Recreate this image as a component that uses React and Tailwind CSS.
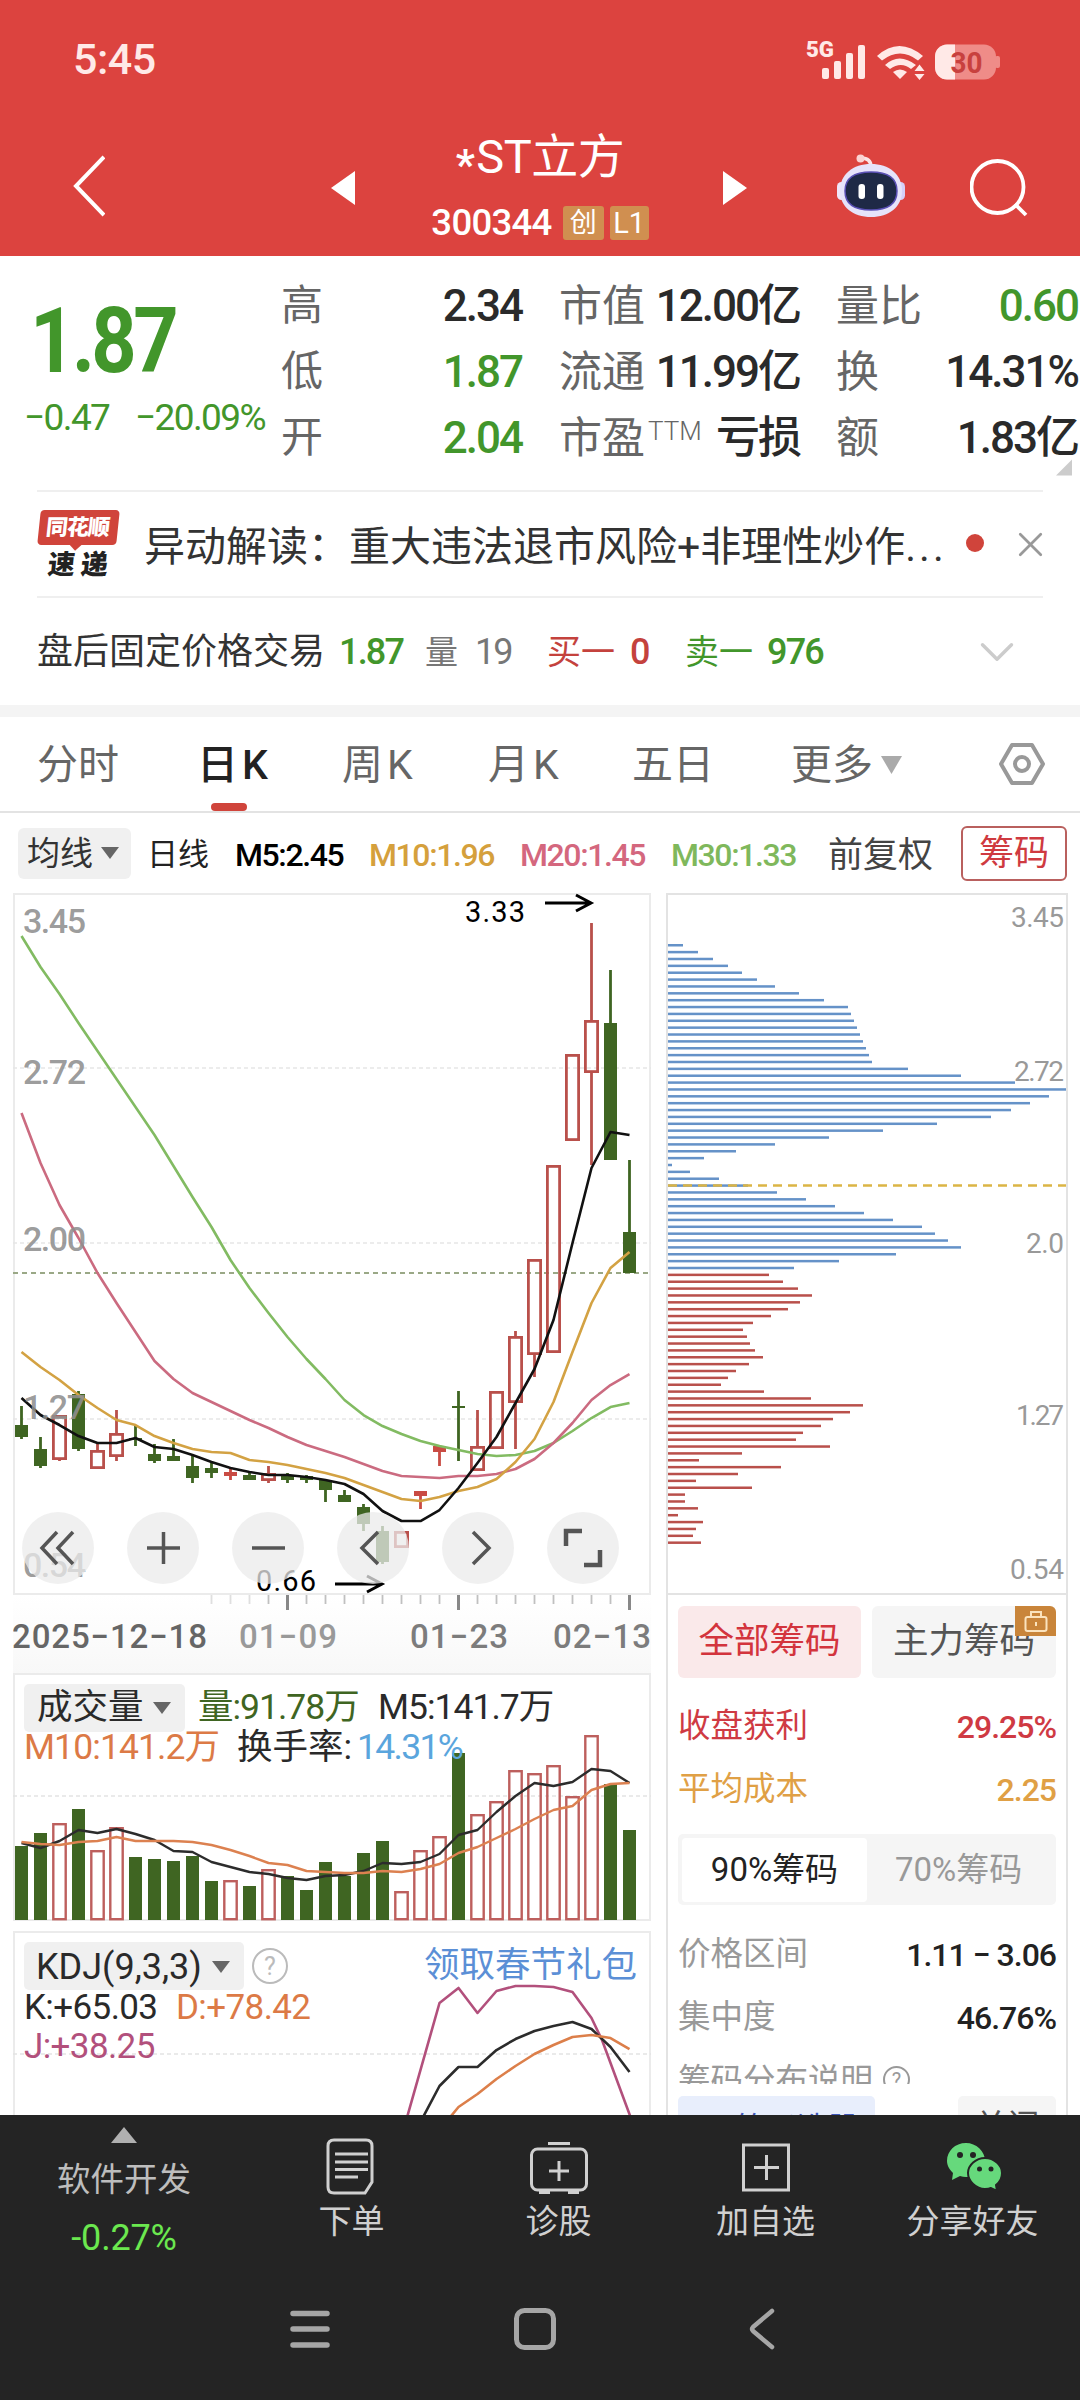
import { ChevronDown, X } from 'lucide-react'

const GREEN = '#3f6522'
const RED = '#b9504b'

// x of the i-th trading day in the left charts
const dayX = (i) => 21.5 + i * 19

const toPoints = (values, from = 0) => values.map((y, i) => `${dayX(i + from)},${y}`).join(' ')

// [direction, body top, body bottom, high, low]
const candles = [
  ['down', 1425, 1437, 1406, 1439],
  ['down', 1449, 1466, 1437, 1468],
  ['up', 1415, 1460, 1415, 1461],
  ['down', 1394, 1449, 1391, 1451],
  ['up', 1450, 1469, 1444, 1469],
  ['up', 1433, 1457, 1410, 1461],
  ['down', 1438, 1440, 1426, 1446],
  ['down', 1454, 1461, 1444, 1463],
  ['down', 1456, 1461, 1439, 1461],
  ['down', 1466, 1478, 1456, 1483],
  ['down', 1468, 1473, 1463, 1478],
  ['solid', 1472, 1476, 1468, 1480],
  ['down', 1475, 1480, 1473, 1480],
  ['up', 1473, 1481, 1466, 1483],
  ['down', 1475, 1480, 1473, 1483],
  ['down', 1476, 1480, 1475, 1483],
  ['down', 1480, 1490, 1479, 1502],
  ['down', 1495, 1502, 1490, 1502],
  ['down', 1507, 1524, 1504, 1531],
  ['down', 1531, 1562, 1526, 1564],
  ['up', 1531, 1548, 1531, 1548],
  ['solid', 1491, 1496, 1491, 1509],
  ['solid', 1446, 1452, 1446, 1466],
  ['down', 1406, 1408, 1391, 1461],
  ['up', 1446, 1471, 1410, 1471],
  ['up', 1391, 1449, 1391, 1449],
  ['up', 1336, 1403, 1331, 1449],
  ['up', 1259, 1355, 1259, 1377],
  ['up', 1165, 1353, 1165, 1353],
  ['up', 1054, 1141, 1054, 1141],
  ['up', 1020, 1073, 923, 1165],
  ['down', 1023, 1160, 970, 1160],
  ['down', 1232, 1273, 1160, 1273],
]

const ma30 = [936, 967, 994, 1023, 1051, 1079, 1107, 1135, 1166, 1197, 1227, 1260, 1288, 1313, 1337, 1359, 1379, 1400, 1415, 1426, 1434, 1441, 1446, 1450, 1454, 1456, 1455, 1451, 1443, 1431, 1418, 1407, 1403]
const ma20 = [1113, 1163, 1205, 1238, 1273, 1303, 1332, 1361, 1379, 1393, 1402, 1411, 1420, 1428, 1437, 1445, 1451, 1457, 1464, 1471, 1476, 1477, 1478, 1476, 1476, 1474, 1469, 1459, 1443, 1423, 1400, 1385, 1374]
const ma10 = [1352, 1367, 1380, 1395, 1408, 1420, 1425, 1436, 1443, 1449, 1452, 1453, 1460, 1462, 1465, 1469, 1473, 1478, 1485, 1492, 1499, 1501, 1497, 1491, 1487, 1479, 1462, 1439, 1402, 1352, 1303, 1268, 1252]
const ma5 = [1398, 1415, 1425, 1436, 1443, 1443, 1438, 1447, 1449, 1455, 1462, 1468, 1472, 1475, 1475, 1477, 1480, 1484, 1494, 1511, 1521, 1521, 1510, 1488, 1463, 1437, 1403, 1369, 1320, 1243, 1168, 1132, 1135]

const volumes = [1846, 1833, 1823, 1809, 1850, 1827, 1857, 1859, 1861, 1856, 1881, 1880, 1886, 1869, 1876, 1890, 1862, 1876, 1853, 1841, 1891, 1850, 1836, 1753, 1814, 1801, 1770, 1773, 1765, 1796, 1735, 1784, 1830]
const vol5 = [1843, 1848, 1841, 1830, 1833, 1829, 1834, 1840, 1851, 1852, 1862, 1867, 1872, 1874, 1878, 1880, 1876, 1875, 1871, 1863, 1864, 1862, 1854, 1835, 1830, 1812, 1796, 1783, 1786, 1782, 1769, 1771, 1783]
const vol10 = [1842, 1844, 1845, 1842, 1841, 1837, 1841, 1841, 1841, 1842, 1845, 1850, 1856, 1863, 1865, 1871, 1872, 1873, 1873, 1871, 1872, 1869, 1864, 1853, 1847, 1838, 1829, 1819, 1810, 1806, 1790, 1784, 1783]

// chip distribution, top price first; the last 40 rows are in profit
const chips = [
  15, 30, 45, 60, 74, 89, 107, 131, 156, 180, 183, 186, 189, 192, 195, 198, 201, 204, 240, 293, 347, 400, 381, 362, 343, 323,
  269, 215, 161, 107, 68, 36, 4, 22, 51, 80, 109, 138, 167, 196, 225, 254, 267, 280, 293, 228, 171, 126,
  101, 115, 130, 144, 132, 120, 103, 85, 75, 79, 82, 87, 95, 81, 68, 60, 53, 96, 143, 195, 182, 165, 153, 135, 128, 162, 74, 31,
  113, 70, 28, 84, 17, 17, 30, 10, 35, 28, 25, 33,
]

const stats = [
  ['高', '2.34', 'text-[#2a2a2a]', '市值', '12.00亿', '量比', '0.60', 'text-[#42962b]'],
  ['低', '1.87', 'text-[#42962b]', '流通', '11.99亿', '换', '14.31%', 'text-[#2a2a2a]'],
  ['开', '2.04', 'text-[#42962b]', '市盈', '亏损', '额', '1.83亿', 'text-[#2a2a2a]'],
]

function Caret({ className }) {
  return (
    <svg viewBox="0 0 18 12" preserveAspectRatio="none" className={className} fill="currentColor">
      <path d="M0 0h18L9 12z" />
    </svg>
  )
}

function StatusBar() {
  return (
    <div className="flex h-[118px] items-center justify-between pl-[73px] pr-[78px] text-[#ffe9e7]">
      <span className="text-[43px] font-medium tracking-[-0.5px]">5:45</span>
      <svg viewBox="804 34 198 44" className="h-[44px] w-[198px]" fill="currentColor">
        <text x="806" y="53.5" fontSize="22" fontWeight="900" textLength="28" lengthAdjust="spacingAndGlyphs">5G</text>
        <rect x="822" y="65" width="7" height="11" rx="2" />
        <rect x="834" y="58" width="7" height="18" rx="2" />
        <rect x="846" y="50" width="7" height="26" rx="2" />
        <rect x="858" y="42" width="7" height="34" rx="2" />
        <path d="M877 53q22-20 46 0l-5 4.500q-18-14-36 0z" />
        <path d="M885 62q14-13 31 0l-5 4q-10-8-21 0z" />
        <path d="M893 69q7-5 14 0l-7 7z" />
        <path d="M914.500 68l5-6.500 5 6.500zM914.500 71l5 6 5-6z" />
        <rect x="935" y="41.500" width="61" height="35" rx="12" fill="#ef8c88" />
        <path d="M947 41.500h8v35h-8a12 12 0 0 1-12-12v-11a12 12 0 0 1 12-12z" />
        <rect x="995" y="53" width="5" height="12" rx="2" fill="#ef8c88" />
        <text x="950.5" y="70" fontSize="30" fontWeight="700" fill="#c8413e" textLength="32" lengthAdjust="spacingAndGlyphs">30</text>
      </svg>
    </div>
  )
}

function RobotIcon() {
  return (
    <svg viewBox="0 0 70 66" className="h-[66px] w-[70px]">
      <path d="M35 14Q35 5 25 5" fill="none" stroke="#fbe3e6" strokeWidth="3.5" />
      <circle cx="24.500" cy="5.500" r="4" fill="#fbd3d3" />
      <rect x="1" y="29" width="9" height="18" rx="4.500" fill="#efe6f8" />
      <rect x="60" y="29" width="9" height="18" rx="4.500" fill="#d5d0f8" />
      <path d="M35 11C53 11 66 21 66 38C66 54 53 64 35 64C17 64 4 54 4 38C4 21 17 11 35 11z" fill="#e6e3fa" />
      <path d="M35 19C51 19 61 24 61 38C61 51 52 57 35 57C18 57 9 51 9 38C9 24 19 19 35 19z" fill="#1e2946" stroke="#5a50b5" strokeWidth="1.500" />
      <rect x="22.500" y="31" width="6.500" height="15" rx="3" fill="#fff" />
      <rect x="41" y="31" width="6.500" height="15" rx="3" fill="#fff" />
    </svg>
  )
}

function Header() {
  return (
    <header className="h-[256px] bg-[#dc433f] text-white">
      <StatusBar />
      <div className="grid h-[138px] grid-cols-[332px_70px_276px_46px_112px_108px_1fr]">
        <svg viewBox="0 0 32 62" className="ml-[73px] mt-[37px] h-[62px] w-[32px]" fill="none" stroke="currentColor" strokeWidth="4">
          <path d="M31 2L3 31l28 29" />
        </svg>
        <svg viewBox="0 0 24 34" className="-ml-[1px] mt-[53px] h-[34px] w-[24px]" fill="currentColor">
          <path d="M24 0v34L0 17z" />
        </svg>
        <div className="flex flex-col items-center pt-[16px]">
          <div className="flex h-[44px] items-center text-[47px] tracking-[-0.5px]">
            <span className="mr-[2px] mt-[18px] text-[42px] font-bold">*</span>ST立方
          </div>
          <div className="mt-[27px] flex h-[36px] items-center gap-[6px]">
            <span className="mr-[5px] text-[36.5px] font-medium tracking-[-0.7px]">300344</span>
            <span className="flex h-[34px] w-[41px] items-center justify-center rounded-[3px] bg-[#d08f50] text-[27px]">创</span>
            <span className="flex h-[34px] w-[39px] items-center justify-center rounded-[3px] bg-[#d08f50] text-[29px]">L1</span>
          </div>
        </div>
        <svg viewBox="0 0 24 34" className="ml-[45px] mt-[53px] h-[34px] w-[24px]" fill="currentColor">
          <path d="M0 0v34l24-17z" />
        </svg>
        <span />
        <div className="mt-[35px]">
          <RobotIcon />
        </div>
        <svg viewBox="0 0 58 60" className="ml-[26px] mt-[41px] h-[60px] w-[58px]" fill="none" stroke="currentColor" strokeWidth="3.8">
          <circle cx="27.500" cy="28" r="26" />
          <path d="M45 45l11 11" />
        </svg>
      </div>
    </header>
  )
}

function Quote() {
  return (
    <section className="relative flex h-[234px]">
      <div className="w-[281px] shrink-0 text-[#42962b]">
        <div className="ml-[30px] mt-[41px] origin-left scale-x-[0.88] text-[90px] font-bold tracking-[-4px]">1.87</div>
        <div className="mt-[12px] flex pl-[24px] text-[37px]">
          <span className="w-[111px] tracking-[-1.6px]">−0.47</span>
          <span className="tracking-[-1.6px]">−20.09%</span>
        </div>
      </div>
      <div className="mt-[17px] flex-1 text-[44px]">
        {stats.map(([a, high, highColor, b, cap, c, last, lastColor], i) => (
          <div key={a} className="grid h-[66px] grid-cols-[80px_161px_37px_94px_147px_36px_90px_152px] items-center">
            <span className="text-[42px] text-[#666]">{a}</span>
            <span className={`text-right font-medium tracking-[-2px] ${highColor}`}>{high}</span>
            <span />
            <span className="flex whitespace-nowrap text-[43px] text-[#666]">
              {b}
              {i === 2 && <sup className="top-0 ml-[3px] mt-[1px] text-[26px] leading-none font-light">TTM</sup>}
            </span>
            <span className="text-right font-medium tracking-[-2px] whitespace-nowrap text-[#2a2a2a]">{cap}</span>
            <span />
            <span className="whitespace-nowrap text-[43px] text-[#666]">{c}</span>
            <span className={`text-right font-medium tracking-[-2px] ${lastColor}`}>{last}</span>
          </div>
        ))}
      </div>
      <svg viewBox="0 0 16 16" className="absolute right-[8px] bottom-[14px] h-[17px] w-[16px]">
        <path d="M16 0v16H0z" fill="#ccc" />
      </svg>
    </section>
  )
}

function News() {
  return (
    <section className="mx-[37px] flex h-[108px] items-center border-y-2 border-[#efefef]">
      <div className="flex w-[82px] shrink-0 flex-col items-center font-black">
        <div className="relative flex h-[35px] w-[79px] -skew-x-6 items-center justify-center rounded-[4px] bg-[#d0443b] pr-[2px] text-[22px] tracking-[-1px] text-white">
          同花顺
          <span className="absolute -bottom-[4px] h-[9px] w-[9px] rotate-45 bg-[#d0443b]" />
        </div>
        <div className="mt-[6px] flex h-[28px] w-[60px] -skew-x-6 items-center justify-between text-[27px] text-[#222]">
          <span>速</span>
          <span>递</span>
        </div>
      </div>
      <p className="mt-[6px] ml-[25px] w-[816px] whitespace-nowrap text-[41px] text-[#333]">
        异动解读：重大违法退市风险+非理性炒作<span className="tracking-[3px]">...</span>
      </p>
      <span className="-mt-[3px] ml-[6px] h-[18px] w-[18px] shrink-0 rounded-full bg-[#d0443b]" />
      <X className="-mr-[8px] ml-[26px] h-[41px] w-[41px] shrink-0 text-[#999]" strokeWidth={1.6} />
    </section>
  )
}

function AfterHours() {
  return (
    <section className="grid h-[107px] grid-cols-[302px_86px_50px_72px_83px_55px_82px_201px_1fr] items-center pt-[1px] pl-[37px] text-[36px] whitespace-nowrap">
      <span className="text-[#333]">盘后固定价格交易</span>
      <span className="font-medium tracking-[-1.8px] text-[#42962b]">1.87</span>
      <span className="text-[33px] text-[#777]">量</span>
      <span className="tracking-[-2px] text-[#777]">19</span>
      <span className="text-[34px] text-[#c4423d]">买一</span>
      <span className="font-medium text-[#c4423d]">0</span>
      <span className="text-[34px] text-[#42962b]">卖一</span>
      <span className="font-medium tracking-[-1.8px] text-[#42962b]">976</span>
      <ChevronDown className="h-[58px] w-[58px] text-[#ccc]" strokeWidth={1.4} />
    </section>
  )
}

function Tabs() {
  return (
    <nav className="grid h-[96px] grid-cols-[160px_145px_146px_144px_159px_208px_1fr] border-b-2 border-[#e3e3e3] pl-[37px] text-[41px] text-[#666]">
      <span className="pt-[28px]">分时</span>
      <span className="flex flex-col font-medium text-[#222]">
        <span className="h-[86px] pt-[28px]">日<span className="ml-[4px]">K</span></span>
        <span className="ml-[14px] h-[8px] w-[36px] rounded-[4px] bg-[#d0443b]" />
      </span>
      <span className="pt-[28px]">周<span className="ml-[4px]">K</span></span>
      <span className="pt-[28px]">月<span className="ml-[4px]">K</span></span>
      <span className="pt-[28px]">五日</span>
      <span className="flex pt-[28px]">
        更多
        <Caret className="mt-[11px] ml-[8px] h-[18px] w-[21px] text-[#aaa]" />
      </span>
      <svg viewBox="0 0 46 44" className="mt-[25px] h-[44px] w-[46px]" fill="none" stroke="#999" strokeWidth="4" strokeLinejoin="round">
        <path d="M13 3h20l11 19-11 19H13L2 22z" />
        <circle cx="23" cy="22" r="7" />
      </svg>
    </nav>
  )
}

function Averages() {
  return (
    <div className="grid h-[80px] grid-cols-[129px_88px_134px_151px_151px_157px_133px_106px] items-center pl-[18px] text-[32px] font-medium whitespace-nowrap">
      <span className="flex h-[51px] w-[113px] items-center rounded-[6px] bg-[#f0f0f0] pl-[9px] text-[33px] font-normal text-[#333]">
        均线
        <Caret className="ml-[8px] h-[12px] w-[18px] text-[#666]" />
      </span>
      <span className="pt-[3px] text-[31px] font-normal text-[#222]">日线</span>
      <span className="pt-[4px] tracking-[-1.4px] text-black">M5:2.45</span>
      <span className="pt-[4px] tracking-[-1.4px] text-[#d5a03c]">M10:1.96</span>
      <span className="pt-[4px] tracking-[-1.4px] text-[#d4677e]">M20:1.45</span>
      <span className="pt-[4px] tracking-[-1.4px] text-[#7fb85c]">M30:1.33</span>
      <span className="pt-[5px] text-[35px] font-normal text-[#444]">前复权</span>
      <span className="flex h-[55px] items-center justify-center rounded-[6px] border-2 border-[#b9605e] text-[35px] font-normal text-[#cf3a40]">筹码</span>
    </div>
  )
}

function RoundButton({ children }) {
  return (
    <button className="flex h-[72px] w-[72px] items-center justify-center rounded-full bg-[#ebebeb]/75">
      <svg viewBox="0 0 72 72" className="h-[72px] w-[72px]" fill="none" stroke="#555" strokeWidth="3.5">
        {children}
      </svg>
    </button>
  )
}

function PriceChart() {
  return (
    <div className="relative h-[702px] border-2 border-[#ebebeb]">
      <svg viewBox="13 893 638 702" className="absolute -top-[2px] -left-[2px] h-[702px] w-[638px]">
        {[1068, 1243, 1419].map((y) => (
          <path key={y} d={`M13 ${y}H651`} stroke="#e6e6e6" strokeWidth="1.5" strokeDasharray="4 3" />
        ))}
        <path d="M13 1273H651" stroke="#9aa886" strokeWidth="1.8" strokeDasharray="5 4" />
        {candles.map(([type, top, bottom, high, low], i) => {
          const x = dayX(i)
          const color = type === 'down' ? GREEN : type === 'solid' ? '#c94b43' : RED
          return (
            <g key={i} stroke={color} strokeWidth="2.8">
              <path d={`M${x} ${high}V${top}M${x} ${bottom}V${low}`} />
              {type === 'up' ? (
                <rect x={x - 6.1} y={top + 1.4} width="12.2" height={bottom - top - 2.8} fill="none" />
              ) : (
                <rect x={x - 6.5} y={top} width="13" height={bottom - top} fill={color} stroke="none" />
              )}
            </g>
          )
        })}
        <g fill="none" strokeWidth="2.6" strokeLinejoin="round">
          <polyline points={toPoints(ma30)} stroke="#82bb62" />
          <polyline points={toPoints(ma20)} stroke="#cb6b80" />
          <polyline points={toPoints(ma10)} stroke="#d3a243" />
          <polyline points={toPoints(ma5)} stroke="#111" />
        </g>
        <g fontSize="34" fontWeight="500" fill="#8f8f8f" fillOpacity="0.9">
          <text x="23" y="933" textLength="63">3.45</text>
          <text x="23" y="1084" textLength="63">2.72</text>
          <text x="23" y="1251" textLength="63">2.00</text>
          <text x="23" y="1419" textLength="63">1.27</text>
          <text x="23" y="1577" textLength="63">0.54</text>
        </g>
        <g fontSize="29" fill="#000">
          <text x="465" y="922" textLength="60">3.33</text>
          <text x="256" y="1591" textLength="60">0.66</text>
        </g>
        <g fill="none" stroke="#000" strokeWidth="3">
          <path d="M545 903h46M576 895l15 8-15 8" />
          <path d="M335 1584h47M367 1576l15 8-15 8" />
        </g>
      </svg>
      <div className="absolute top-[617px] left-[7px] flex gap-[33px]">
        <RoundButton>
          <path d="M35 20L20 36l15 16M51 20L36 36l15 16" />
        </RoundButton>
        <RoundButton>
          <path d="M20 36h33M36.500 20v32" />
        </RoundButton>
        <RoundButton>
          <path d="M20 36h33" />
        </RoundButton>
        <RoundButton>
          <path d="M41 20L25 36l16 16" />
        </RoundButton>
        <RoundButton>
          <path d="M31 20l16 16-16 16" />
        </RoundButton>
        <RoundButton>
          <path d="M19 34V19h16M53 38v15H37" strokeWidth="4.500" />
        </RoundButton>
      </div>
    </div>
  )
}

function DateAxis() {
  const ticks = Array.from({ length: 23 }, (_, i) => i + 10)
  return (
    <svg viewBox="13 1595 638 78" className="block h-[78px] w-[638px]">
      <defs>
        <linearGradient id="axisShade" x1="0" y1="0" x2="0" y2="1">
          <stop offset="0" stopColor="#fff" />
          <stop offset="1" stopColor="#f8f8f8" />
        </linearGradient>
      </defs>
      <rect x="13" y="1595" width="638" height="78" fill="url(#axisShade)" />
      {ticks.map((i) => {
        const major = (i - 14) % 9 === 0
        return (
          <path
            key={i}
            d={`M${dayX(i)} 1595v${major ? 15 : 9}`}
            stroke={major ? '#888' : '#c0c0c0'}
            strokeWidth={major ? 3 : 1.8}
            strokeOpacity={i < 13 ? 0.5 : 1}
          />
        )
      })}
      <g fontSize="33" fontWeight="500" fill="#7c7c7c">
        <text x="12" y="1648" textLength="195" fill="#666">2025−12−18</text>
        <text x="239" y="1648" textLength="98" fill="#999">01−09</text>
        <text x="410" y="1648" textLength="98">01−23</text>
        <text x="553" y="1648" textLength="98">02−13</text>
      </g>
    </svg>
  )
}

function VolumeChart() {
  return (
    <div className="relative h-[248px] border-2 border-[#ebebeb] pt-[9px] pl-[9px]">
      <svg viewBox="13 1673 638 248" className="absolute -top-[2px] -left-[2px] h-[248px] w-[638px]">
        <path d="M13 1796H651" stroke="#e4e4e4" strokeWidth="1.5" strokeDasharray="4 3" />
        {volumes.map((top, i) => {
          const x = dayX(i)
          return candles[i][0] === 'down' ? (
            <rect key={i} x={x - 6.5} y={top} width="13" height={1920 - top} fill={GREEN} />
          ) : (
            <rect key={i} x={x - 6.2} y={top + 1.2} width="12.4" height={1918 - top} fill="none" stroke="#bd5f5d" strokeWidth="2.4" />
          )
        })}
        <g fill="none" strokeWidth="2.4" strokeLinejoin="round">
          <polyline points={toPoints(vol5)} stroke="#2c2c2c" />
          <polyline points={toPoints(vol10)} stroke="#dc8150" />
        </g>
      </svg>
      <div className="relative text-[35.5px] whitespace-nowrap text-[#2a2a2a]">
        <div className="flex h-[48px] items-center">
          <span className="flex h-[48px] w-[161px] items-center rounded-[5px] bg-[#f0f0f0] pl-[13px]">
            成交量
            <Caret className="ml-[9px] h-[12px] w-[18px] text-[#666]" />
          </span>
          <span className="ml-[13px] w-[180px] tracking-[-1px] text-[#3f6522]">量:91.78万</span>
          <span className="tracking-[-1px]">M5:141.7万</span>
        </div>
        <div className="flex h-[32px] items-center">
          <span className="w-[213px] tracking-[-0.9px] text-[#dc7a46]">M10:141.2万</span>
          <span className="w-[120px]">换手率:</span>
          <span className="tracking-[-1.7px] text-[#5aa5dd]">14.31%</span>
        </div>
      </div>
    </div>
  )
}

function KdjChart() {
  return (
    <div className="relative mt-[10px] h-[190px] border-2 border-[#ebebeb] pt-[9px] pl-[9px]">
      <svg viewBox="13 1931 638 190" className="absolute -top-[2px] -left-[2px] h-[190px] w-[638px]">
        <path d="M13 2054H651" stroke="#e4e4e4" strokeWidth="1.5" strokeDasharray="4 3" />
        <g fill="none" strokeWidth="2.6" strokeLinejoin="round">
          <polyline points={`406,2121 ${toPoints([2003, 1988, 2013, 1991, 1986, 1986, 1987, 1992, 2018], 22)} 602,2040 632,2121`} stroke="#b2507c" />
          <polyline points={`421,2121 ${toPoints([2086, 2067, 2067, 2050, 2039, 2031, 2026, 2022, 2029, 2047, 2072], 22)}`} stroke="#2c2c2c" />
          <polyline points={`447,2121 ${toPoints([2107, 2094, 2079, 2066, 2054, 2045, 2037, 2035, 2038, 2049], 23)}`} stroke="#dc7f4a" />
        </g>
      </svg>
      <div className="relative text-[35px] whitespace-nowrap text-[#2a2a2a]">
        <div className="flex h-[48px] items-center">
          <span className="flex h-[48px] w-[220px] items-center rounded-[5px] bg-[#f0f0f0] pt-[2px] pl-[12px]">
            <span className="w-[166px] text-[36px]">KDJ(9,3,3)</span>
            <Caret className="ml-[10px] h-[12px] w-[18px] text-[#666]" />
          </span>
          <span className="ml-[8px] flex h-[36px] w-[36px] items-center justify-center rounded-full border-[2.5px] border-[#bbb] text-[25px] text-[#bbb]">?</span>
          <span className="ml-[136px] text-[35.5px] text-[#5b8fd6]">领取春节礼包</span>
        </div>
        <div className="flex h-[35px] items-center">
          <span className="w-[152px] tracking-[-0.6px]">K:+65.03</span>
          <span className="tracking-[-0.6px] text-[#dc7a46]">D:+78.42</span>
        </div>
        <div className="flex h-[42px] items-center tracking-[-0.6px] text-[#b2507c]">J:+38.25</div>
      </div>
    </div>
  )
}

function ChipChart() {
  return (
    <svg viewBox="667 894 398 698" className="block h-[698px] w-[398px]">
      {chips.map((width, i) => (
        <rect key={i} x="667" y={943 + i * 6.867} width={width} height="2.5" fill={i < 48 ? '#6592c8' : '#b9504b'} />
      ))}
      <path d="M667 1184.500H1066" stroke="#dbb545" strokeWidth="2.4" strokeDasharray="9 6" />
      <g fontSize="28" fill="#999">
        <text x="1010" y="926" textLength="53">3.45</text>
        <text x="1013" y="1080" textLength="50">2.72</text>
        <text x="1025" y="1252" textLength="38">2.0</text>
        <text x="1015" y="1424" textLength="48">1.27</text>
        <text x="1009" y="1578" textLength="54">0.54</text>
      </g>
    </svg>
  )
}

function ChipRow({ label, value, className, valueClass }) {
  return (
    <div className={`flex items-center justify-between ${className}`}>
      <span>{label}</span>
      <span className={`text-[32px] font-medium tracking-[-1px] ${valueClass}`}>{value}</span>
    </div>
  )
}

function ChipPanel() {
  return (
    <div className="h-[1226px] w-[402px] overflow-hidden border-2 border-b-0 border-[#e3e3e3] text-[32.5px]">
      <ChipChart />
      <div className="border-t-2 border-[#e3e3e3] px-[10px] pt-[11px]">
        <div className="flex justify-between text-[35.5px]">
          <span className="flex h-[72px] w-[183px] items-center justify-center rounded-[6px] bg-[#fae9ea] text-[#d3343d]">全部筹码</span>
          <span className="relative flex h-[72px] w-[184px] items-center justify-center rounded-[6px] bg-[#f5f5f5] text-[#555]">
            主力筹码
            <span className="absolute top-0 right-0 flex h-[30px] w-[41px] items-center justify-center rounded-tr-[6px] bg-[#c9853a]">
              <svg viewBox="0 0 24 24" className="h-[24px] w-[24px]" fill="none" stroke="#fbe3bd" strokeWidth="2">
                <rect x="1.500" y="8" width="21" height="14" rx="2" />
                <path d="M7 8V3h10v5M12 13v4" />
              </svg>
            </span>
          </span>
        </div>
        <ChipRow className="mt-[17px] h-[63px] text-[#cf3a43]" label="收盘获利" value="29.25%" />
        <ChipRow className="h-[63px] text-[#e0a045]" label="平均成本" value="2.25" />
        <div className="mt-[13px] flex h-[71px] items-center rounded-[5px] bg-[#f5f5f5] pl-[4px] text-[33px]">
          <span className="flex h-[64px] w-[185px] items-center justify-center rounded-[4px] bg-white text-[#222]">90%筹码</span>
          <span className="w-[184px] pl-[28px] text-[#999]">70%筹码</span>
        </div>
        <ChipRow className="mt-[18px] h-[63px] text-[#999]" label="价格区间" value="1.11 − 3.06" valueClass="text-[#222]" />
        <ChipRow className="h-[63px] text-[#999]" label="集中度" value="46.76%" valueClass="text-[#222]" />
        <div className="flex h-[35px] overflow-hidden pt-[16px] text-[#999]">
          筹码分布说明
          <span className="mt-[1px] ml-[10px] flex h-[27px] w-[27px] shrink-0 items-center justify-center rounded-full border-2 border-[#999] text-[20px]">?</span>
        </div>
        <div className="mt-[12px] flex justify-between">
          <span className="flex h-[70px] w-[197px] items-start rounded-t-[5px] bg-[#e8eefc] pt-[17px] pl-[12px] text-[31px] text-[#3e57b8]">
            <span className="mt-[2px] h-[24px] w-[16px] bg-[#3e57c8]" />
            <span className="ml-[29px]">筹码选股</span>
          </span>
          <span className="flex h-[70px] w-[98px] items-start justify-center rounded-t-[5px] bg-[#f5f5f5] pt-[15px] text-[#555]">关闭</span>
        </div>
      </div>
    </div>
  )
}

function Action({ label, children }) {
  return (
    <div className="flex w-[207px] flex-col items-center pt-[22px]">
      <svg viewBox="0 0 60 58" className="h-[58px] w-[60px]" fill="none" stroke="#d0d0d0" strokeWidth="3">
        {children}
      </svg>
      <span className="mt-[10px] text-[33px] text-[#d0d0d0]">{label}</span>
    </div>
  )
}

function BottomBar() {
  return (
    <footer className="h-[285px] bg-[#242424]">
      <div className="flex h-[165px] whitespace-nowrap">
        <div className="flex w-[248px] flex-col items-center pt-[12px]">
          <Caret className="h-[16px] w-[26px] rotate-180 text-[#b0b0b0]" />
          <span className="mt-[20px] text-[33.5px] text-[#bdbdbd]">软件开发</span>
          <span className="mt-[23px] text-[36px] tracking-[-0.2px] text-[#6be84f]">-0.27%</span>
        </div>
        <Action label="下单">
          <path d="M12 3h32q6 0 6 6v36L43 56H12q-6 0-6-6V9q0-6 6-6z" />
          <path d="M13 17h33M13 25h33M13 32.500h33M13 40h23" />
        </Action>
        <Action label="诊股">
          <rect x="2.500" y="12" width="55" height="41" rx="6" />
          <path d="M19 6.500h22M10 55.500h11M39 55.500h11M20 34h20M30 24v20" />
        </Action>
        <Action label="加自选">
          <rect x="7.500" y="8" width="45" height="45" />
          <path d="M18 30.500h25M30.500 18v25" />
        </Action>
        <Action label="分享好友">
          <g transform="translate(1 0)">
            <path d="M22 6C11 6 3 14 3 24c0 5 3 9 6 12l-1 7 8-4c2 .6 4 1 6 1 10 0 19-6 19-16S32 6 22 6z" fill="#66d97c" stroke="none" />
            <path d="M41 21c-9 0-17 7-17 15s8 16 17 16c2 0 4 0 6-1l6 3-1-6c4-3 6-7 6-12 0-8-8-15-17-15z" fill="#66d97c" stroke="#242424" strokeWidth="2" />
            <g fill="#242424" stroke="none">
              <circle cx="16" cy="18" r="3" />
              <circle cx="29" cy="18" r="3" />
              <circle cx="35.500" cy="32" r="2.500" />
              <circle cx="47" cy="32" r="2.500" />
            </g>
          </g>
        </Action>
      </div>
      <div className="flex h-[98px] items-center pl-[290px]">
        <svg viewBox="0 0 40 42" className="h-[42px] w-[40px]" stroke="#a6a6a6" strokeWidth="5.500" strokeLinecap="round">
          <path d="M3 5.500h34M3 21h34M3 37h34" />
        </svg>
        <svg viewBox="0 0 42 42" className="ml-[184px] h-[42px] w-[42px]" fill="none" stroke="#a6a6a6" strokeWidth="5">
          <rect x="2.500" y="2.500" width="37" height="37" rx="8" />
        </svg>
        <svg viewBox="0 0 27 42" className="ml-[192px] h-[42px] w-[27px]" fill="none" stroke="#a6a6a6" strokeWidth="4.5" strokeLinecap="round" strokeLinejoin="round">
          <path d="M24 3L5 19q-2 2 0 4l19 16" />
        </svg>
      </div>
    </footer>
  )
}

export default function App() {
  return (
    <div className="h-[2400px] w-[1080px] overflow-hidden bg-white font-['Roboto','Noto_Sans_CJK_SC',sans-serif] leading-none">
      <Header />
      <Quote />
      <News />
      <AfterHours />
      <div className="h-[12px] bg-[#f4f4f4]" />
      <Tabs />
      <Averages />
      <main className="flex h-[1222px] justify-between overflow-hidden pr-[12px] pl-[13px]">
        <div className="w-[638px]">
          <PriceChart />
          <DateAxis />
          <VolumeChart />
          <KdjChart />
        </div>
        <ChipPanel />
      </main>
      <BottomBar />
    </div>
  )
}
